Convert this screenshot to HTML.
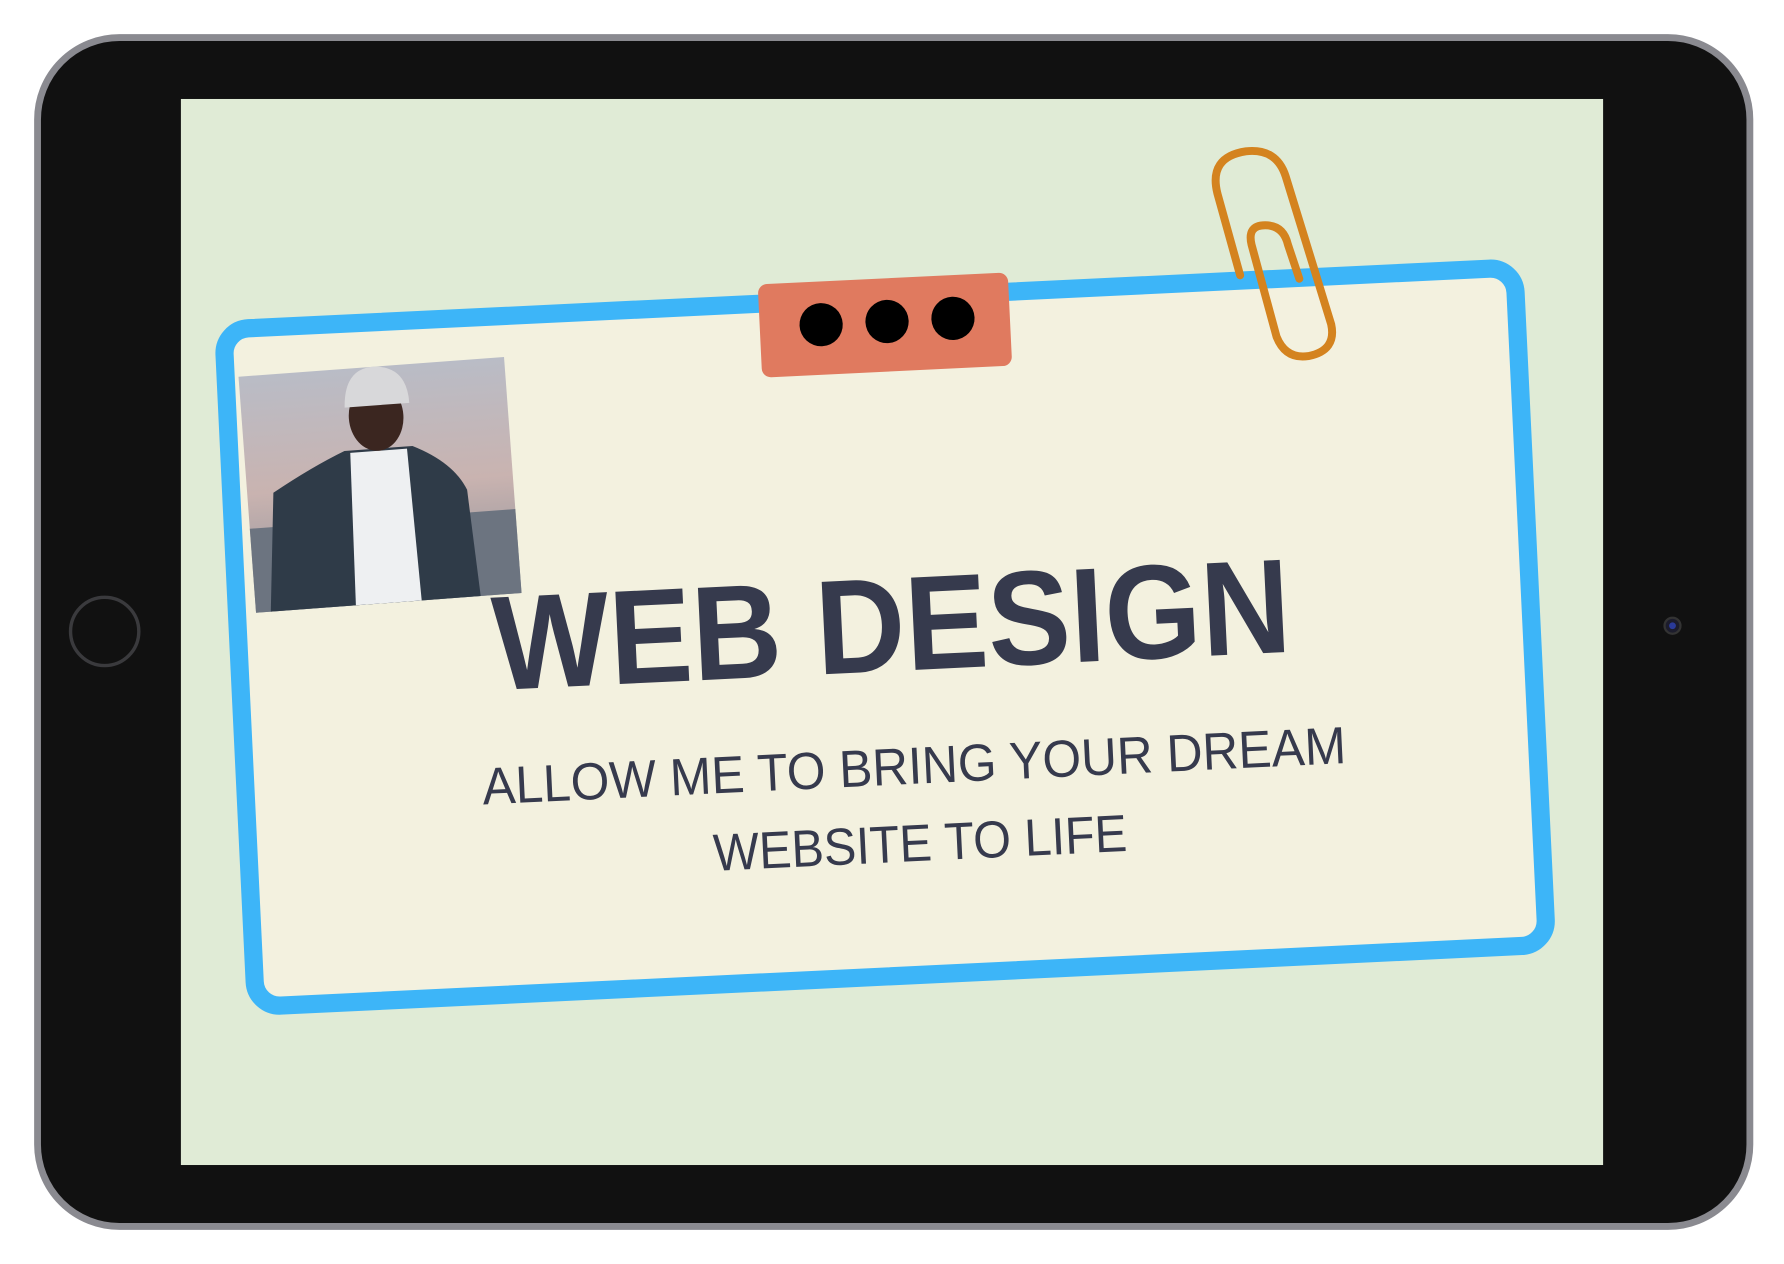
<!DOCTYPE html>
<html><head><meta charset="utf-8"><style>html,body{margin:0;padding:0;background:#fff;width:1784px;height:1264px;overflow:hidden}svg{display:block}</style></head>
<body>
<svg width="1784" height="1264" viewBox="0 0 1568 1111" preserveAspectRatio="none" xmlns="http://www.w3.org/2000/svg">
<defs>
<linearGradient id="sky" x1="0" y1="0" x2="0" y2="1"><stop offset="0" stop-color="#b9bcc6"/><stop offset="0.5" stop-color="#c9b3b0"/><stop offset="1" stop-color="#8a8f98"/></linearGradient>
</defs>
<rect x="0" y="0" width="1568" height="1111" fill="#fff"/>
<rect x="33" y="33" width="1505" height="1045" rx="72" fill="#111" stroke="#8a8a90" stroke-width="6"/>
<rect x="159" y="87" width="1250" height="937" fill="#e0ebd6"/>
<circle cx="92" cy="555" r="30" fill="none" stroke="#3a3a3d" stroke-width="3"/>
<circle cx="1470" cy="550" r="7" fill="#1c1c2c" stroke="#333" stroke-width="2"/>
<circle cx="1470" cy="550" r="3" fill="#2a3a9a"/>
<g transform="rotate(-2.75 778 561)">
<rect x="210" y="262" width="1136" height="596" rx="22" fill="#f3f1df" stroke="#3db5f8" stroke-width="16"/>
<rect x="681" y="245" width="220" height="82" rx="8" fill="#e07a5f"/>
<circle cx="735" cy="271" r="19" fill="#000" transform="translate(0,12)"/>
<circle cx="793" cy="271" r="19" fill="#000" transform="translate(0,12)"/>
<circle cx="851" cy="271" r="19" fill="#000" transform="translate(0,12)"/>
<g transform="translate(12,-25) rotate(-1.5 330 430)">
<rect x="212" y="326" width="234" height="208" fill="url(#sky)"/>
<rect x="212" y="460" width="234" height="74" fill="#6c7480"/>
<path d="M225 534 L235 430 Q270 410 300 398 L360 398 Q395 415 405 440 L410 534 Z" fill="#2f3b48"/>
<path d="M305 400 L355 400 L358 534 L300 534 Z" fill="#eef0f2"/>
<ellipse cx="330" cy="370" rx="24" ry="30" fill="#3b2620"/>
<path d="M303 360 Q305 325 332 326 Q360 328 360 360 Z" fill="#d8d8da"/>
</g>
<g transform="translate(-8,-20)">
<text x="792" y="610" text-anchor="middle" font-family="Liberation Sans, sans-serif" font-weight="bold" font-size="118" fill="#363a4d" textLength="702" lengthAdjust="spacingAndGlyphs">WEB DESIGN</text>
<text x="806" y="710" text-anchor="middle" font-family="Liberation Sans, sans-serif" font-size="46" fill="#363a4d" textLength="760" lengthAdjust="spacingAndGlyphs">ALLOW ME TO BRING YOUR DREAM</text>
<text x="808" y="778" text-anchor="middle" font-family="Liberation Sans, sans-serif" font-size="46" fill="#363a4d" textLength="364" lengthAdjust="spacingAndGlyphs">WEBSITE TO LIFE</text>
</g>
</g>
<g fill="none" stroke="#d4831f" stroke-width="7" stroke-linecap="round" stroke-linejoin="round">
<path d="M1090 242 L1070 170 Q1062 138 1095 133 Q1122 130 1130 155 L1170 285 Q1175 308 1150 313 Q1130 316 1122 296 L1100 215 Q1096 198 1112 198 Q1128 198 1132 215 L1142 245"/>
</g>
</svg>
</body></html>
